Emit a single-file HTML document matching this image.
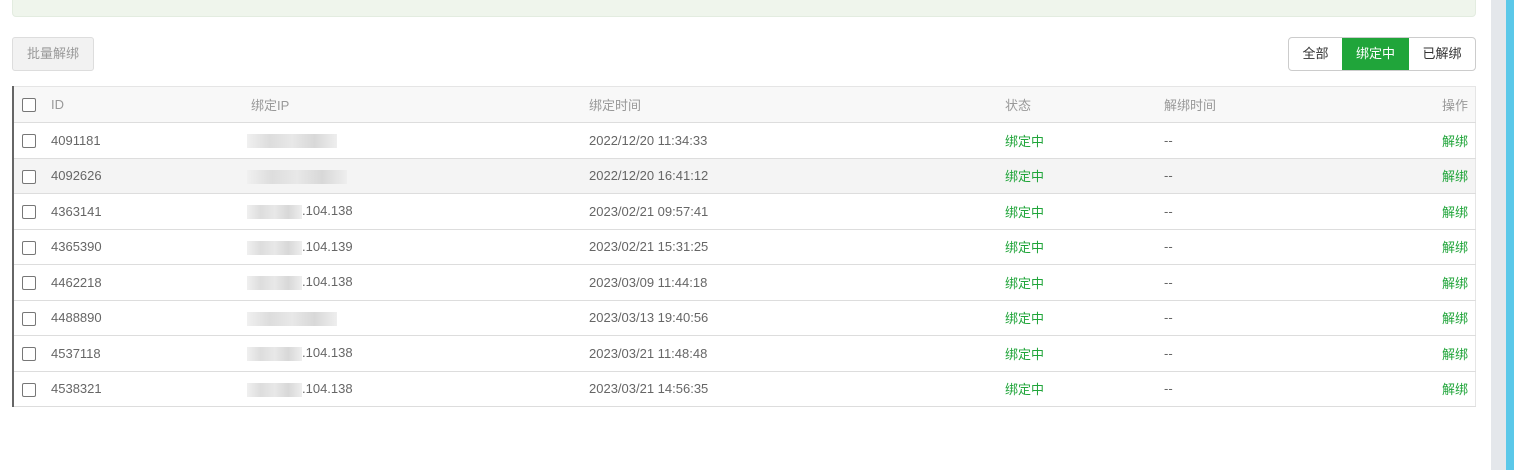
<!DOCTYPE html>
<html><head><meta charset="utf-8"><style>
*{margin:0;padding:0;box-sizing:border-box}
body{width:1514px;height:470px;background:#fff;font-family:"Liberation Sans","Noto Sans CJK SC",sans-serif;font-size:13px;color:#666;position:relative;overflow:hidden}
.top{position:absolute;left:12px;top:-4px;width:1464px;height:21px;background:#eff5ec;border:1px solid #e3ece0;border-radius:4px}
.gray{position:absolute;left:1491px;top:0;width:15px;height:470px;background:#e4e7eb}
.blue{position:absolute;left:1506px;top:0;width:8px;height:470px;background:#5bc8e9}
.batch{position:absolute;left:12px;top:37px;width:82px;height:34px;border:1px solid #ddd;border-radius:3px;background:#f2f2f2;color:#999;font-size:13px;line-height:32px;text-align:center}
.grp{position:absolute;left:1288px;top:37px;width:188px;height:34px;display:flex;border:1px solid #ccc;border-radius:4px;overflow:hidden;font-size:13px}
.grp div{line-height:32px;text-align:center;color:#333}
.grp .on{background:#20a53a;color:#fff}
table{position:absolute;left:12px;top:86px;width:1464px;border-collapse:collapse;border-left:2px solid #666;border-right:1px solid #e5e5e5;table-layout:fixed}
td,th{height:35.5px;border-bottom:1px solid #ddd;text-align:left;font-weight:normal;white-space:nowrap}
th{color:#999;background:#f8f8f8;border-top:1px solid #e5e5e5;height:36px}
tr:nth-child(3) td{background:#f4f4f4}
.cb{width:14px;height:14px;border:1px solid #777;border-radius:2px;display:inline-block;vertical-align:middle;background:#fff;margin-left:8px}
.g{color:#20a53a}
.r{text-align:right;padding-right:7px}
.blur{display:inline-block;height:14px;background:linear-gradient(90deg,#f0f0f0,#ddd,#e8e8e8,#d8d8d8,#eee);vertical-align:middle;margin-left:-4px}
</style></head><body>
<div class="top"></div><div class="gray"></div><div class="blue"></div>
<div class="batch">批量解绑</div>
<div class="grp"><div style="width:53px">全部</div><div class="on" style="width:67px">绑定中</div><div style="width:66px">已解绑</div></div>
<table>
<colgroup><col style="width:38px"><col style="width:200px"><col style="width:338px"><col style="width:416px"><col style="width:159px"><col><col style="width:100px"></colgroup>
<tr><th><span class="cb"></span></th><th>ID</th><th>绑定IP</th><th>绑定时间</th><th>状态</th><th>解绑时间</th><th class="r">操作</th></tr>
<tr><td><span class="cb"></span></td><td>4091181</td><td><span class="blur" style="width:90px"></span></td><td>2022/12/20 11:34:33</td><td class="g">绑定中</td><td>--</td><td class="r g">解绑</td></tr>
<tr><td><span class="cb"></span></td><td>4092626</td><td><span class="blur" style="width:100px"></span></td><td>2022/12/20 16:41:12</td><td class="g">绑定中</td><td>--</td><td class="r g">解绑</td></tr>
<tr><td><span class="cb"></span></td><td>4363141</td><td><span class="blur" style="width:55px"></span>.104.138</td><td>2023/02/21 09:57:41</td><td class="g">绑定中</td><td>--</td><td class="r g">解绑</td></tr>
<tr><td><span class="cb"></span></td><td>4365390</td><td><span class="blur" style="width:55px"></span>.104.139</td><td>2023/02/21 15:31:25</td><td class="g">绑定中</td><td>--</td><td class="r g">解绑</td></tr>
<tr><td><span class="cb"></span></td><td>4462218</td><td><span class="blur" style="width:55px"></span>.104.138</td><td>2023/03/09 11:44:18</td><td class="g">绑定中</td><td>--</td><td class="r g">解绑</td></tr>
<tr><td><span class="cb"></span></td><td>4488890</td><td><span class="blur" style="width:90px"></span></td><td>2023/03/13 19:40:56</td><td class="g">绑定中</td><td>--</td><td class="r g">解绑</td></tr>
<tr><td><span class="cb"></span></td><td>4537118</td><td><span class="blur" style="width:55px"></span>.104.138</td><td>2023/03/21 11:48:48</td><td class="g">绑定中</td><td>--</td><td class="r g">解绑</td></tr>
<tr><td><span class="cb"></span></td><td>4538321</td><td><span class="blur" style="width:55px"></span>.104.138</td><td>2023/03/21 14:56:35</td><td class="g">绑定中</td><td>--</td><td class="r g">解绑</td></tr>
</table>
</body></html>
